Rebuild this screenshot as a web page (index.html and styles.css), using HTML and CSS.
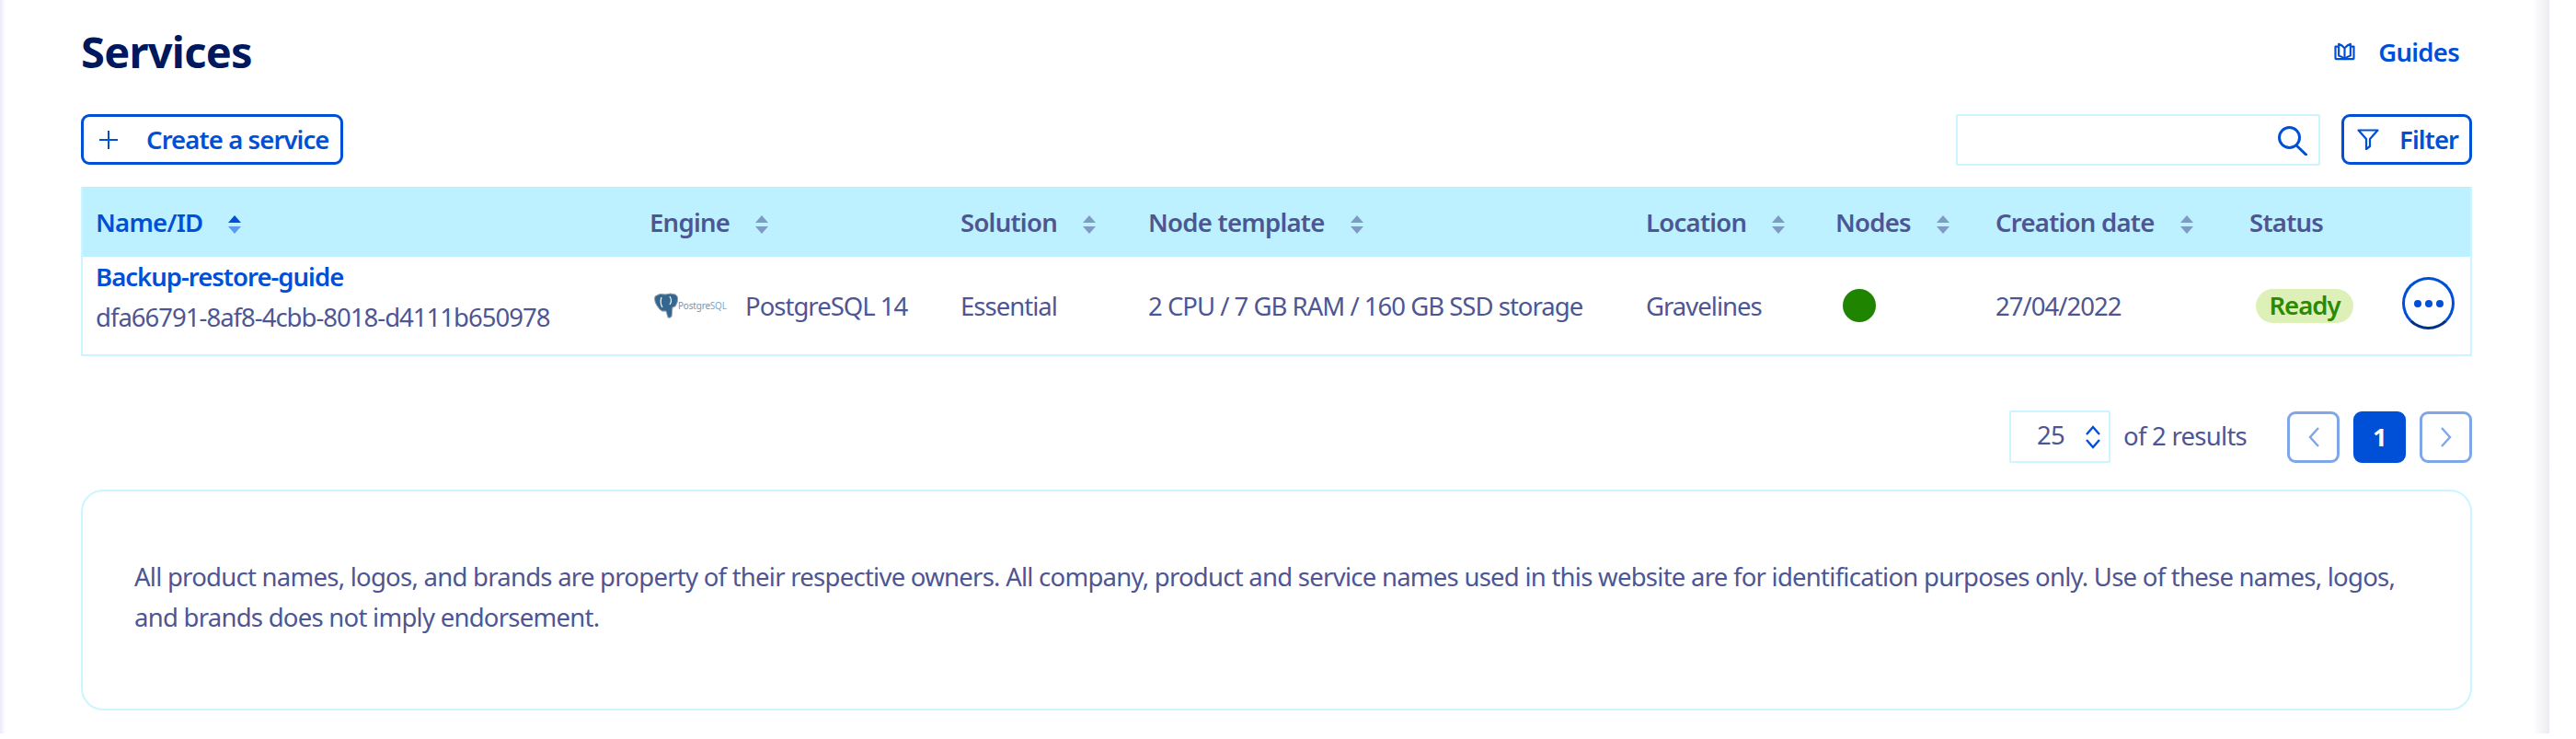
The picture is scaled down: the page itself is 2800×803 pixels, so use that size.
FILE: index.html
```html
<!doctype html>
<html lang="en">
<head>
<meta charset="UTF-8">
<title>Services</title>
<link rel="stylesheet" href="styles.css">
</head>
<body>
<div class="page">

 <div class="title_row">
  <h1>Services</h1>
  <a class="guides" href="#">
   <svg width="25" height="20" viewBox="0 0 26 22" fill="none" stroke="#0050d7" stroke-width="2.4" stroke-linejoin="round"><path d="M5 5H2v14q0 1 1 1h20q1 0 1-1V5h-3"/><path d="M13 7Q10 3 6 2v14q4 1 7 4 3-3 7-4V2q-4 1-7 5zV20"/></svg>
   <span>Guides</span>
  </a>
 </div>

 <div class="toolbar">
  <a class="btn" href="#">
   <svg width="22" height="22" viewBox="0 0 22 22" stroke="#0050d7" stroke-width="2"><path d="M11 1v20M1 11h20"/></svg>
   <span>Create a service</span>
  </a>
  <div class="toolbar_right">
   <div class="search">
    <svg width="33" height="33" viewBox="0 0 33 33" fill="none" stroke="#0050d7" stroke-width="3"><circle cx="13.5" cy="13.5" r="11"/><path d="M21 22l10.5 10" stroke-linecap="round"/></svg>
   </div>
   <a class="btn btn_filter" href="#">
    <svg width="24" height="23" viewBox="0 0 24 23" fill="none" stroke="#0050d7" stroke-width="2.2" stroke-linejoin="round"><path d="M1.5 1.5h21L14 11v8l-4 3V11z"/></svg>
    <span>Filter</span>
   </a>
  </div>
 </div>

 <table class="services">
  <colgroup>
   <col class="c_name"><col class="c_engine"><col class="c_solution"><col class="c_node"><col class="c_location"><col class="c_nodes"><col class="c_date"><col class="c_status"><col class="c_actions">
  </colgroup>
  <thead>
   <tr>
    <th class="sorted">Name/ID<span class="sort"></span></th>
    <th>Engine<span class="sort"></span></th>
    <th>Solution<span class="sort"></span></th>
    <th>Node template<span class="sort"></span></th>
    <th>Location<span class="sort"></span></th>
    <th>Nodes<span class="sort"></span></th>
    <th>Creation date<span class="sort"></span></th>
    <th>Status</th>
    <th></th>
   </tr>
  </thead>
  <tbody>
   <tr>
    <td class="name_cell"><a href="#">Backup-restore-guide</a><div>dfa66791-8af8-4cbb-8018-d4111b650978</div></td>
    <td>
     <div class="engine">
      <svg class="pg_logo" width="82" height="30" viewBox="0 0 82 30"><path d="M2 5q5-4 11-2 6-2 11 0 4 2 2 9l-2 4-3 1-1 10q-2 2-4 1l-2-7q-5 1-7-2Q0 11 2 5z" fill="#336791" stroke="#9aa3ad" stroke-width="1"/><path d="M9 6q-2 6 1 11M18 5q3 5 0 9" fill="none" stroke="#fff" stroke-width="1.2"/><text x="27" y="19" class="pg_word">Postgre<tspan fill="#7fa8cc">SQL</tspan></text></svg>
      <span>PostgreSQL 14</span>
     </div>
    </td>
    <td>Essential</td>
    <td>2 CPU / 7 GB RAM / 160 GB SSD storage</td>
    <td>Gravelines</td>
    <td><span class="dot"></span></td>
    <td>27/04/2022</td>
    <td><span class="badge">Ready</span></td>
    <td><button class="more" type="button"><i></i><i></i><i></i></button></td>
   </tr>
  </tbody>
 </table>

 <div class="pager">
  <div class="page_size">
   <span class="page_num">25</span>
   <svg width="18" height="28" viewBox="0 0 18 28" fill="none" stroke="#0050d7" stroke-width="2.4"><path d="M2 11l7-8 7 8M2 17l7 8 7-8"/></svg>
  </div>
  <span class="results">of 2 results</span>
  <div class="pages">
   <a class="pg" href="#"><svg width="14" height="24" viewBox="0 0 14 24" fill="none" stroke="#7fa6e9" stroke-width="2.4"><path d="M12 2L3 12l9 10"/></svg></a>
   <a class="pg pg_on" href="#">1</a>
   <a class="pg" href="#"><svg width="14" height="24" viewBox="0 0 14 24" fill="none" stroke="#7fa6e9" stroke-width="2.4"><path d="M2 2l9 10-9 10"/></svg></a>
  </div>
 </div>

 <div class="notice">
  <p>All product names, logos, and brands are property of their respective owners. All company, product and service names used in this website are for identification purposes only. Use of these names, logos,<br>and brands does not imply endorsement.</p>
 </div>

</div>
</body>
</html>
```

FILE: styles.css
```css
html, body {
    margin: 0;
    background: #fff;
}
body {
    font-family: "Noto Sans", sans-serif;
    font-size: 27.5px;
    letter-spacing: -0.027em;
    color: #4d5693;
}
a {
    text-decoration: none;
    color: #0050d7;
}
.page {
    box-sizing: border-box;
    width: 2771px;
    height: 797px;
    padding: 0 84px 0 88px;
    background:
        linear-gradient(to right, #ece9fb, rgba(255,255,255,0) 6px),
        linear-gradient(to left, #ebecf0, rgba(255,255,255,0) 18px);
}

/* title */
.title_row {
    display: flex;
    justify-content: space-between;
    align-items: center;
    height: 112px;
    padding-right: 14px;
}
h1 {
    margin: 0;
    font-size: 47px;
    line-height: 56px;
    font-weight: 700;
    color: #00185e;
}
.guides {
    display: flex;
    align-items: center;
    gap: 24px;
    font-weight: 600;
}

/* toolbar */
.toolbar {
    display: flex;
    justify-content: space-between;
    margin-top: 12px;
    height: 55px;
}
.toolbar_right {
    display: flex;
    gap: 23px;
}
.btn {
    box-sizing: border-box;
    display: flex;
    align-items: center;
    gap: 30px;
    height: 55px;
    padding: 0 12px 0 16px;
    border: 3px solid #0050d7;
    border-radius: 9px;
    font-weight: 600;
    letter-spacing: -0.033em;
    white-space: nowrap;
}
.btn_filter {
    gap: 22px;
    width: 142px;
    padding: 0 0 0 14px;
}
.search {
    box-sizing: border-box;
    display: flex;
    justify-content: flex-end;
    align-items: center;
    width: 396px;
    height: 56px;
    padding-right: 12px;
    border: 2px solid #ccf5ff;
    border-radius: 2px;
}

/* table */
.services {
    width: 100%;
    margin-top: 24px;
    border-collapse: separate;
    border-spacing: 0;
    table-layout: fixed;
    border: 2px solid #ccf5ff;
    border-top: 0;
}
.c_name { width: 602px; }
.c_engine { width: 338px; }
.c_solution { width: 204px; }
.c_node { width: 541px; }
.c_location { width: 206px; }
.c_nodes { width: 174px; }
.c_date { width: 276px; }
.c_status { width: 166px; }
th {
    box-sizing: border-box;
    height: 76px;
    padding: 0 0 0 14px;
    background: #bef1ff;
    font-weight: 600;
    text-align: left;
}
th.sorted {
    color: #0050d7;
}
.sort {
    display: inline-block;
    position: relative;
    width: 14px;
    height: 20px;
    margin-left: 28px;
    vertical-align: -2px;
    opacity: 0.55;
}
.sort::before, .sort::after {
    content: "";
    position: absolute;
    left: 0;
    border-left: 7px solid transparent;
    border-right: 7px solid transparent;
}
.sort::before {
    top: 0;
    border-bottom: 8px solid #4d5693;
}
.sort::after {
    bottom: 0;
    border-top: 8px solid #4d5693;
}
th.sorted .sort {
    opacity: 1;
}
th.sorted .sort::before {
    border-bottom-color: #0050d7;
}
th.sorted .sort::after {
    border-top-color: #5f9af0;
}
td {
    box-sizing: border-box;
    height: 106px;
    padding: 0 0 0 14px;
    letter-spacing: -0.036em;
    white-space: nowrap;
}
.name_cell {
    padding-bottom: 18px;
    line-height: 44px;
}
.name_cell a {
    font-weight: 600;
}
.engine {
    display: flex;
    align-items: center;
    gap: 18px;
    margin-left: 4px;
}
.pg_word {
    font-size: 10px;
    letter-spacing: -0.02em;
    fill: #8a8f96;
}
.dot {
    display: block;
    width: 36px;
    height: 36px;
    margin-left: 8px;
    border-radius: 50%;
    background: #1f8400;
}
.badge {
    display: inline-block;
    box-sizing: border-box;
    width: 106px;
    height: 37px;
    margin-left: 7px;
    border-radius: 19px;
    background: #dcf0b8;
    color: #2b8a00;
    font-weight: 600;
    line-height: 36px;
    text-align: center;
}
.more {
    display: flex;
    justify-content: center;
    align-items: center;
    gap: 4px;
    box-sizing: border-box;
    width: 57px;
    height: 57px;
    padding: 0;
    margin-bottom: 5px;
    border: 3px solid #0050d7;
    border-bottom-color: #00318a;
    border-radius: 50%;
    background: #fff;
}
.more i {
    width: 8px;
    height: 8px;
    border-radius: 50%;
    background: #0050d7;
}

/* pagination */
.pager {
    display: flex;
    justify-content: flex-end;
    align-items: center;
    margin-top: 59px;
    height: 57px;
}
.page_size {
    box-sizing: border-box;
    display: flex;
    align-items: center;
    justify-content: space-between;
    width: 110px;
    height: 57px;
    padding: 0 8px 0 28px;
    border: 2px solid #ccf5ff;
    border-radius: 2px;
}
.page_num {
    padding-bottom: 4px;
}
.results {
    margin-left: 14px;
    padding-bottom: 2px;
}
.pages {
    display: flex;
    gap: 15px;
    margin-left: 44px;
}
.pg {
    box-sizing: border-box;
    display: flex;
    justify-content: center;
    align-items: center;
    width: 57px;
    height: 56px;
    border: 3px solid #7fa6e9;
    border-radius: 9px;
}
.pg_on {
    border-color: #0050d7;
    background: #0050d7;
    color: #fff;
    font-weight: 700;
}

/* notice */
.notice {
    box-sizing: border-box;
    display: flex;
    align-items: center;
    height: 240px;
    margin-top: 29px;
    padding: 0 56px 6px;
    border: 2px solid #ccf5ff;
    border-radius: 24px;
}
.notice p {
    margin: 0;
    line-height: 44px;
    white-space: nowrap;
}
```
